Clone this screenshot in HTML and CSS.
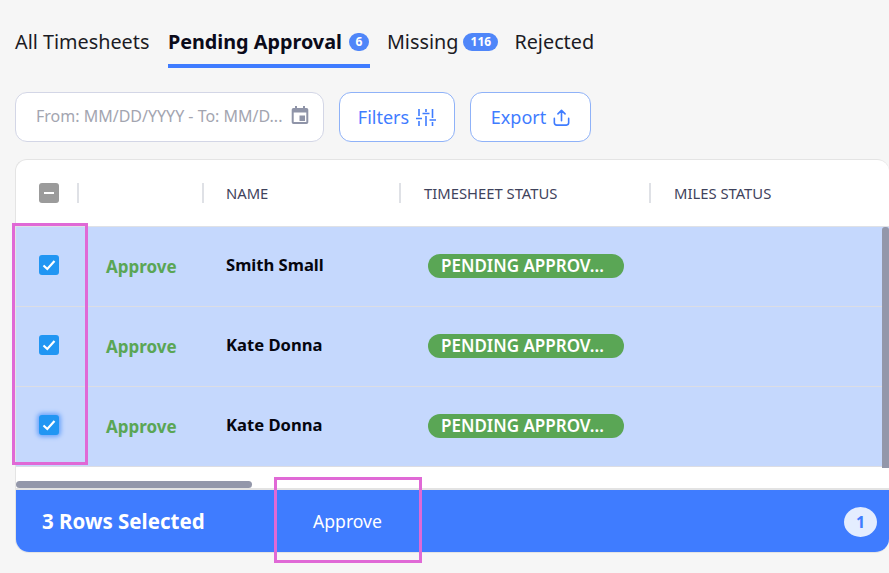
FILE: index.html
```html
<!DOCTYPE html>
<html lang="en">
<head>
<meta charset="utf-8">
<title>Timesheets</title>
<link rel="stylesheet" href="styles.css">
</head>
<body>
<div class="page">
  <nav class="tabs">
    <a class="tab first">All Timesheets</a>
    <a class="tab active">Pending Approval <span class="count small">6</span></a>
    <a class="tab">Missing <span class="count wide">116</span></a>
    <a class="tab">Rejected</a>
  </nav>
  <div class="toolbar">
    <div class="date">
      <span class="placeholder">From: MM/DD/YYYY - To: MM/D...</span>
      <svg class="cal" width="20" height="20" viewBox="0 0 20 20"><path fill="#8f94a8" d="M5 1h2v2h6V1h2v2h1.5A1.8 1.8 0 0 1 18.300 4.800v12.400a1.800 1.800 0 0 1-1.800 1.800h-13a1.800 1.800 0 0 1-1.800-1.800V4.800A1.800 1.800 0 0 1 3.500 3H5zM3.700 7.500v9.500h12.600V7.500zM9.500 10.500h5.500v5.500h-5.500z"/></svg>
    </div>
    <button class="btn filters">Filters
      <svg width="20" height="17" viewBox="0 0 20 17" fill="none" stroke="#3f7cff" stroke-width="1.600"><path d="M3 0v7M0 9.500h6M3 12v5M10 0v3M6.500 4.500h7M10 7v10M16.500 0v9M13.500 11h6.500M16.500 13v4"/></svg>
    </button>
    <button class="btn export">Export
      <svg width="17" height="17" viewBox="0 0 18 19" fill="none" stroke="#3f7cff" stroke-width="1.800" stroke-linecap="round" stroke-linejoin="round"><path d="M9 13V2M5 5.500 9 1.500l4 4M1 10.500v5a2.500 2.500 0 0 0 2.500 2.500h11a2.500 2.500 0 0 0 2.500-2.500v-5"/></svg>
    </button>
  </div>
  <section class="table">
    <div class="row head">
      <div class="cell chk"><span class="box minus"></span></div>
      <div class="cell act"></div>
      <div class="cell name">NAME</div>
      <div class="cell stat">TIMESHEET STATUS</div>
      <div class="cell miles">MILES STATUS</div>
    </div>
    <div class="row body">
      <div class="cell chk"><span class="box"><svg width="20" height="20" viewBox="0 0 20 20" fill="none" stroke="#fff" stroke-width="2.200"><path d="M4.500 10.500 8.300 14l7.200-8"/></svg></span></div>
      <div class="cell act"><a class="approve">Approve</a></div>
      <div class="cell name">Smith Small</div>
      <div class="cell stat"><span class="pill">PENDING APPROV...</span></div>
      <div class="cell miles"></div>
    </div>
    <div class="row body">
      <div class="cell chk"><span class="box"><svg width="20" height="20" viewBox="0 0 20 20" fill="none" stroke="#fff" stroke-width="2.200"><path d="M4.500 10.500 8.300 14l7.200-8"/></svg></span></div>
      <div class="cell act"><a class="approve">Approve</a></div>
      <div class="cell name">Kate Donna</div>
      <div class="cell stat"><span class="pill">PENDING APPROV...</span></div>
      <div class="cell miles"></div>
    </div>
    <div class="row body last">
      <div class="cell chk"><span class="box focus"><svg width="20" height="20" viewBox="0 0 20 20" fill="none" stroke="#fff" stroke-width="2.200"><path d="M4.500 10.500 8.300 14l7.200-8"/></svg></span></div>
      <div class="cell act"><a class="approve">Approve</a></div>
      <div class="cell name">Kate Donna</div>
      <div class="cell stat"><span class="pill">PENDING APPROV...</span></div>
      <div class="cell miles"></div>
    </div>
    <div class="hscroll"><span class="hthumb"></span></div>
    <div class="selbar">
      <strong class="selcount">3 Rows Selected</strong>
      <span class="selaction">Approve</span>
      <span class="selbadge">1</span>
    </div>
    <span class="vthumb"></span>
  </section>
  <div class="mark mark-rows"></div>
  <div class="mark mark-approve"></div>
</div>
</body>
</html>
```

FILE: styles.css
```css
* { box-sizing: border-box; }
html, body { margin: 0; padding: 0; }
body {
  width: 889px;
  height: 573px;
  overflow: hidden;
  background: #f6f6f6;
  font-family: "Noto Sans", "Open Sans", sans-serif;
  color: #0b0b1a;
}
.page { position: relative; width: 889px; height: 573px; padding: 28px 0 0 15px; }

.tabs { display: flex; gap: 16px; height: 40px; }
.tab {
  display: flex;
  align-items: flex-start;
  gap: 5px;
  height: 40px;
  padding-top: 0;
  font-size: 19.8px;
  line-height: 28px;
  color: #1b1b24;
  white-space: nowrap;
}
.tab.first { margin-right: 2.5px; }
.tab.active { gap: 7px; margin-right: 1px; font-weight: 700; color: #0b0b1a; border-bottom: 4px solid #3f7cff; padding-right: 1px; }
.count {
  display: inline-flex;
  align-items: center;
  justify-content: center;
  margin-top: 5px;
  height: 18px;
  background: #4f86f9;
  color: #fff;
  border-radius: 9px;
  font-size: 12px;
  line-height: 18px;
  font-weight: 700;
}
.count.small { width: 20px; }
.count.wide { width: 35px; }

.toolbar { display: flex; gap: 15px; margin-top: 24px; height: 50px; }
.date {
  display: flex;
  align-items: center;
  justify-content: space-between;
  width: 309px;
  height: 50px;
  padding: 0 13px 0 20px;
  background: #fff;
  border: 1px solid #d3d6e6;
  border-radius: 12px;
}
.placeholder { margin-bottom: 2px; font-size: 16px; color: #a3a5b0; white-space: nowrap; }
.cal { margin-top: -4px; }
.btn {
  display: flex;
  align-items: center;
  justify-content: center;
  gap: 7px;
  height: 50px;
  padding: 0;
  background: #fff;
  border: 1px solid #8fb2f8;
  border-radius: 12px;
  font-family: inherit;
  font-size: 18px;
  color: #3f7cff;
}
.filters { width: 116px; }
.export { width: 121px; gap: 7px; }

.table {
  position: relative;
  margin-top: 17px;
  width: 874px;
  height: 394px;
  background: #fff;
  border: 1px solid #e4e4e4;
  border-right: 0;
  border-radius: 12px 12px 14px 14px;
  overflow: hidden;
}
.row {
  display: grid;
  grid-template-columns: 61px 125px 197px 250px 1fr;
  align-items: center;
}
.head {
  height: 67px;
  border-bottom: 1px solid #dfe1e6;
  font-size: 14.8px;
  color: #3f435c;
}
.head .cell { height: 20px; display: flex; align-items: center; padding-left: 23px; line-height: 20px; }
.head .cell + .cell { border-left: 2px solid #dfe1e6; }
.head .name { padding-left: 22px; }
.head .chk { padding-left: 5px; justify-content: center; }
.body {
  height: 80px;
  background: #c5d8fd;
  border-bottom: 1px solid #dcdde4;
  font-size: 16.6px;
  font-weight: 700;
  color: #06060f;
}
.body .cell { padding-left: 24px; margin-bottom: 4px; }
.body .chk { padding-left: 5px; display: flex; justify-content: center; }
.body .act { padding-left: 29px; margin-bottom: 0; }
.body .stat { padding-left: 29px; margin-bottom: 2px; }
.box {
  display: block;
  width: 20px;
  height: 20px;
  background: #2196f3;
  border-radius: 3px;
}
.box svg { display: block; }
.box.minus { background: #9b9b9b; position: relative; }
.box.minus::after {
  content: "";
  position: absolute;
  left: 5px;
  top: 9px;
  width: 10px;
  height: 2px;
  background: #fff;
}
.box.focus { box-shadow: 0 0 4px 2px #6ea6fb; }
.approve { color: #5aa655; font-size: 17px; }
.pill {
  display: block;
  width: 196px;
  height: 24px;
  padding-left: 13px;
  background: #5aa655;
  color: #fff;
  border-radius: 12px;
  font-size: 17px;
  font-weight: 600;
  line-height: 23px;
  white-space: nowrap;
}
.hscroll { height: 23px; padding: 14px 0 0 0; border-bottom: 2px solid #e3e3e3; }
.hthumb { display: block; width: 236px; height: 7px; background: #9397aa; border-radius: 4px; }
.selbar {
  display: flex;
  align-items: center;
  height: 63px;
  padding: 0 12px 0 26px;
  background: #3f7cff;
  color: #fff;
}
.selcount { width: 271px; margin-bottom: 2px; font-size: 20.5px; font-weight: 700; }
.selaction { margin-bottom: 2px; font-size: 17.6px; }
.selbadge {
  display: flex;
  align-items: center;
  justify-content: center;
  margin-left: auto;
  width: 33px;
  height: 30px;
  border-radius: 50%;
  background: #e4edff;
  color: #3f7cff;
  font-size: 16px;
  font-weight: 700;
}
.vthumb {
  position: absolute;
  top: 67px;
  right: 0;
  width: 7px;
  height: 241px;
  background: #9397aa;
  border-radius: 3px 3px 0 0;
}
.mark { position: absolute; border: 3px solid #e069d6; pointer-events: none; }
.mark-rows { left: 12px; top: 223px; width: 76px; height: 242px; }
.mark-approve { left: 274px; top: 477px; width: 148px; height: 86px; }
```
